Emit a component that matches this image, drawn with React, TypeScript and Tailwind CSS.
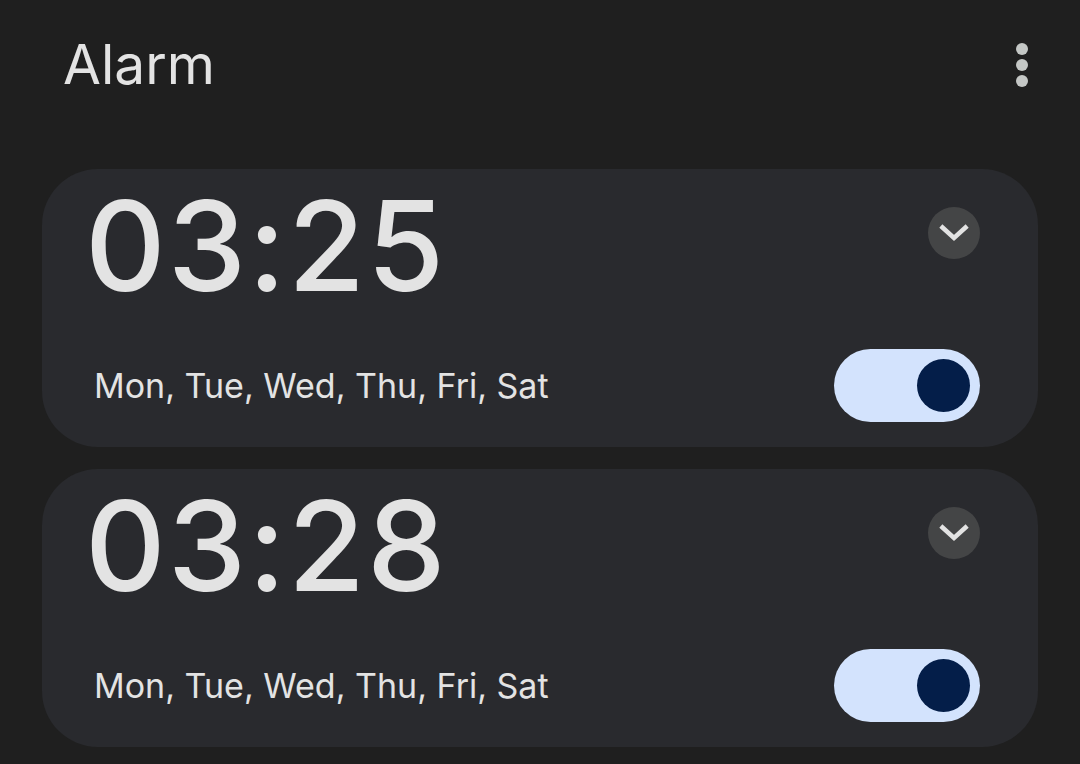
type Alarm = {
  time: string;
  days: string;
  on: boolean;
};

const alarms: Alarm[] = [
  { time: "03:25", days: "Mon, Tue, Wed, Thu, Fri, Sat", on: true },
  { time: "03:28", days: "Mon, Tue, Wed, Thu, Fri, Sat", on: true },
];

function Toggle({ on }: { on: boolean }) {
  return (
    <div className="w-[146px] h-[73px] rounded-full bg-[#d3e3fd] flex items-center justify-end pr-[10px]">
      <div className="w-[53px] h-[53px] rounded-full bg-[#041e49]" />
    </div>
  );
}

function AlarmCard({ alarm }: { alarm: Alarm }) {
  return (
    <div className="bg-[#292a2e] rounded-[56px] h-[278px] pl-[43px] pr-[58px] flex flex-col">
      <div className="flex items-start justify-between">
        <div className="text-[125px] leading-[150px] font-medium tracking-[2px] text-[#e3e3e3] mt-[2px]">
          {alarm.time}
        </div>
        <div className="mt-[38px] w-[52px] h-[52px] rounded-full bg-[#444546] flex items-center justify-center">
          <svg width="30" height="18" viewBox="0 0 30 18" fill="none">
            <polyline
              points="3.5,3.5 15,14 26.5,3.5"
              stroke="#e3e3e3"
              strokeWidth="4.5"
              strokeLinecap="square"
            />
          </svg>
        </div>
      </div>
      <div className="flex items-center justify-between mt-[28px]">
        <div className="pl-[9px] text-[34px] text-[#e3e3e3]">{alarm.days}</div>
        <Toggle on={alarm.on} />
      </div>
    </div>
  );
}

export default function App() {
  return (
    <div
      className="w-[1080px] h-[764px] bg-[#1f1f1f] overflow-hidden"
      style={{ fontFamily: "Inter, 'Open Sans', sans-serif" }}
    >
      <div className="h-[130px] flex items-center justify-between pl-[63px] pr-[52px]">
        <h1 className="text-[55px] text-[#e3e3e3] -mt-[2px]">Alarm</h1>
        <div className="flex flex-col gap-[4px] items-center -mt-[1px]">
          <span className="w-[12px] h-[12px] rounded-full bg-[#c4c7c5]" />
          <span className="w-[12px] h-[12px] rounded-full bg-[#c4c7c5]" />
          <span className="w-[12px] h-[12px] rounded-full bg-[#c4c7c5]" />
        </div>
      </div>
      <div className="mt-[39px] mx-[42px] flex flex-col gap-[22px]">
        {alarms.map((a, i) => (
          <AlarmCard key={i} alarm={a} />
        ))}
      </div>
    </div>
  );
}
